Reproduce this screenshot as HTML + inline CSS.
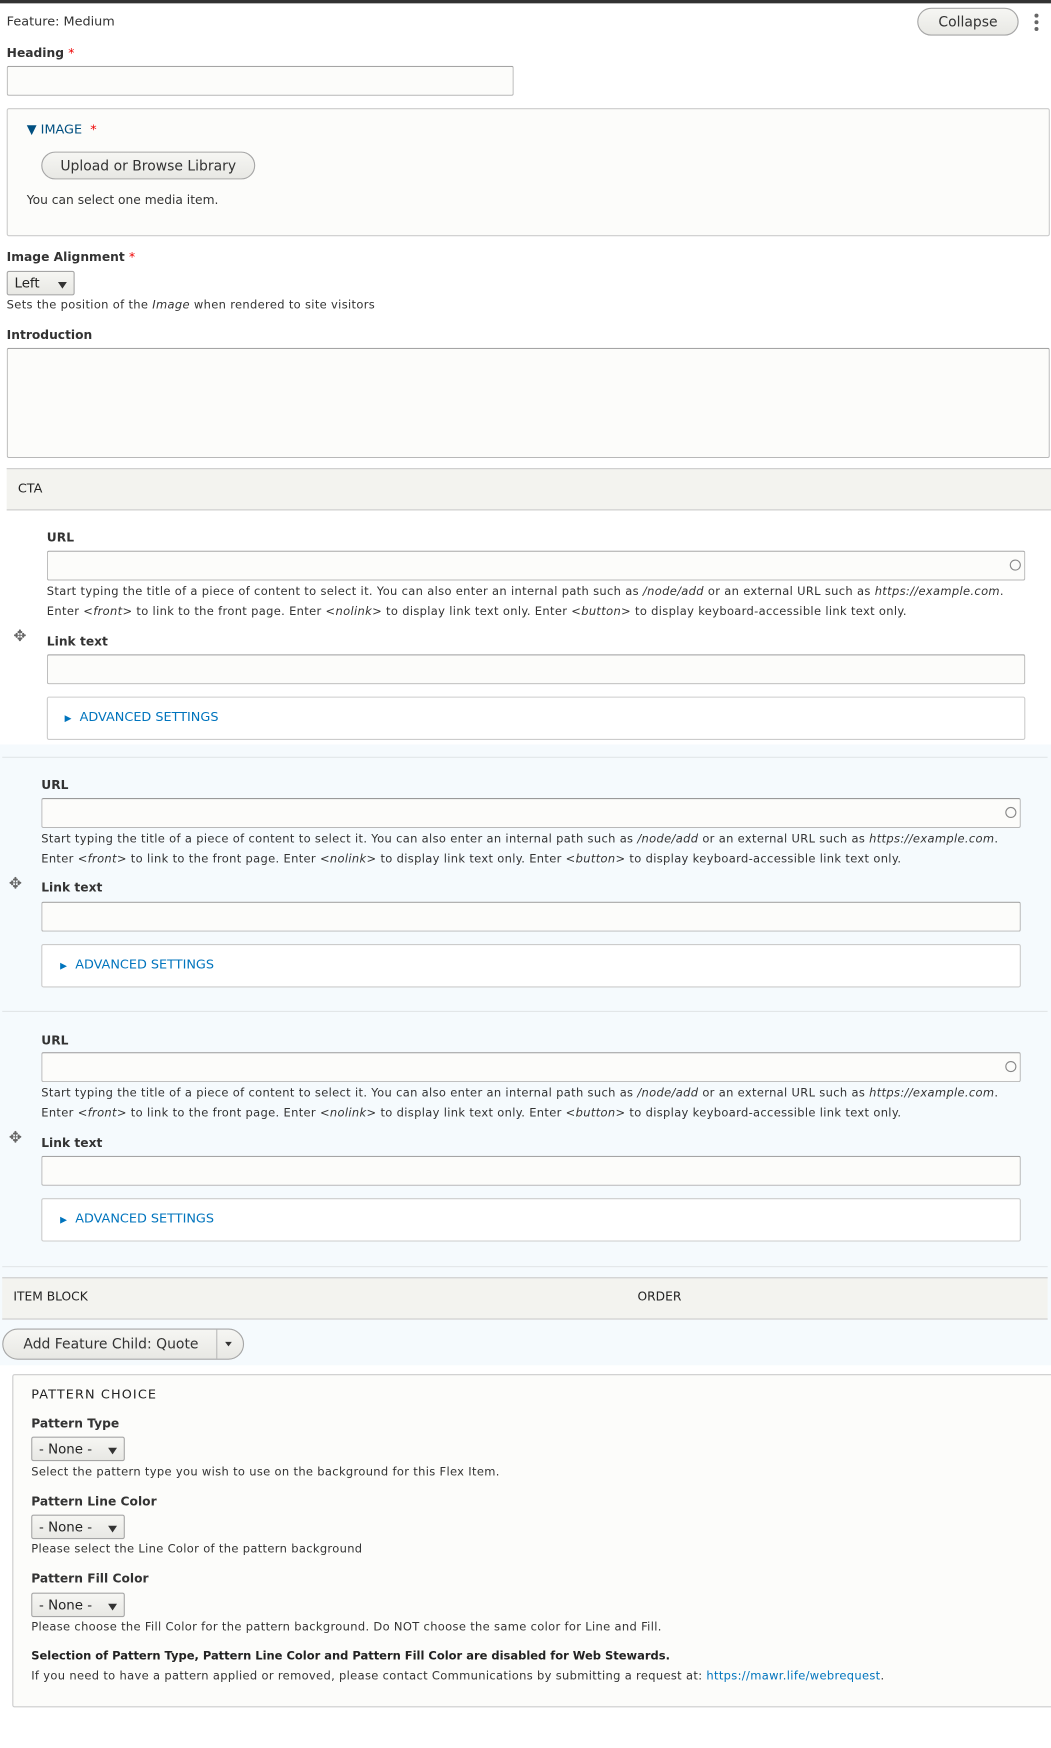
<!DOCTYPE html>
<html><head><meta charset="utf-8"><style>
html,body{margin:0;padding:0;background:#fff;width:1051px;height:1748px;overflow:hidden}
#w{position:absolute;left:0;top:0;width:943px;height:1568px;transform:scale(1.1145);transform-origin:0 0;font-family:"DejaVu Sans","Liberation Sans",sans-serif;color:#222}
.a{position:absolute;white-space:nowrap}
.lab{font-size:11px;font-weight:bold;color:#333}
.d{font-size:10.3px;color:#333;letter-spacing:0.3px}
.req{color:#e00;font-weight:normal}
.inp{position:absolute;background:#fcfcfa;border:1px solid #b8b8b8;border-top-color:#999;border-radius:2px;box-sizing:border-box}
.btn{position:absolute;box-sizing:border-box;border:1px solid #a6a6a6;border-radius:14px;background:linear-gradient(#f6f6f3,#e8e8e4);font-size:12.5px;color:#333;text-align:center}
.sel{position:absolute;box-sizing:border-box;border:1px solid #a6a6a6;border-radius:2px;background:linear-gradient(#f6f6f3,#e8e8e4);font-size:12px;color:#222;padding-left:6px}
.sel:after{content:"";position:absolute;right:6px;top:9px;border-left:4px solid transparent;border-right:4px solid transparent;border-top:6px solid #333}
.fs{position:absolute;box-sizing:border-box;border:1px solid #ccc;border-radius:2px;background:#fcfcfa}
.adv{color:#0074bd;font-size:11.5px}
.blue{color:#0074bd}
i{font-style:italic}
.circ{position:absolute;width:8px;height:8px;border:1px solid #888;border-radius:50%}
</style></head><body><div id="w">
<div class="a" style="left:0;top:0;width:943px;height:3px;background:#333"></div>
<div class="a" style="left:6px;top:12px;font-size:11.5px;color:#333">Feature: Medium</div>
<div class="btn" style="left:823px;top:7px;width:91px;height:25px;line-height:23px">Collapse</div>
<svg class="a" style="left:927px;top:11px" width="6" height="18"><circle cx="3" cy="3" r="1.8" fill="#666"/><circle cx="3" cy="9" r="1.8" fill="#666"/><circle cx="3" cy="15" r="1.8" fill="#666"/></svg>

<div class="a lab" style="left:6px;top:41px">Heading <span class="req">*</span></div>
<div class="inp" style="left:6px;top:59px;width:455px;height:27px"></div>

<div class="fs" style="left:6px;top:97px;width:936px;height:115px"></div>
<div class="a adv" style="left:24px;top:109px;color:#004f80">▼ IMAGE <span class="req">&nbsp;*</span></div>
<div class="btn" style="left:37px;top:136px;width:192px;height:25px;line-height:23px">Upload or Browse Library</div>
<div class="a" style="left:24px;top:173px;font-size:11px;color:#333">You can select one media item.</div>

<div class="a lab" style="left:6px;top:224px">Image Alignment <span class="req">*</span></div>
<div class="sel" style="left:6px;top:243px;width:61px;height:22px;line-height:20px">Left</div>
<div class="a d" style="left:6px;top:268px">Sets the position of the <i>Image</i> when rendered to site visitors</div>

<div class="a lab" style="left:6px;top:294px">Introduction</div>
<div class="inp" style="left:6px;top:312px;width:936px;height:99px"></div>

<div class="a" style="left:6px;top:420px;width:937px;height:36px;background:#f3f3ef;border-top:1px solid #ccc;border-bottom:1px solid #ccc"></div>
<div class="a" style="left:16px;top:431px;font-size:11.5px;color:#222">CTA</div>

<!-- row 1 -->
<div class="a lab" style="left:42px;top:476px">URL</div>
<div class="inp" style="left:42px;top:494px;width:878px;height:27px"></div>
<div class="circ" style="left:906px;top:502px"></div>
<div class="a d" style="left:42px;top:525px">Start typing the title of a piece of content to select it. You can also enter an internal path such as <i>/node/add</i> or an external URL such as <i>https://example.com</i>.</div>
<div class="a d" style="left:42px;top:543px">Enter <i>&lt;front&gt;</i> to link to the front page. Enter <i>&lt;nolink&gt;</i> to display link text only. Enter <i>&lt;button&gt;</i> to display keyboard-accessible link text only.</div>
<div class="a" style="left:12px;top:563px;font-size:14px;color:#666">✥</div>
<div class="a lab" style="left:42px;top:569px">Link text</div>
<div class="inp" style="left:42px;top:587px;width:878px;height:27px"></div>
<div class="fs" style="left:42px;top:625px;width:878px;height:39px;background:#fff"></div>
<div class="a adv" style="left:58px;top:636px"><span style="font-size:8px">▶</span>&nbsp; ADVANCED SETTINGS</div>

<div class="a" style="left:0;top:668px;width:943px;height:557px;background:#f5fafd"></div>
<div class="a" style="left:2px;top:679px;width:938px;height:1px;background:#e2e6e8"></div>
<div class="a lab" style="left:37px;top:698px">URL</div>
<div class="inp" style="left:37px;top:716px;width:879px;height:27px"></div>
<div class="circ" style="left:902px;top:724px"></div>
<div class="a d" style="left:37px;top:747px">Start typing the title of a piece of content to select it. You can also enter an internal path such as <i>/node/add</i> or an external URL such as <i>https://example.com</i>.</div>
<div class="a d" style="left:37px;top:765px">Enter <i>&lt;front&gt;</i> to link to the front page. Enter <i>&lt;nolink&gt;</i> to display link text only. Enter <i>&lt;button&gt;</i> to display keyboard-accessible link text only.</div>
<div class="a" style="left:8px;top:785px;font-size:14px;color:#666">✥</div>
<div class="a lab" style="left:37px;top:790px">Link text</div>
<div class="inp" style="left:37px;top:809px;width:879px;height:27px"></div>
<div class="fs" style="left:37px;top:847px;width:879px;height:39px;background:#fff"></div>
<div class="a adv" style="left:54px;top:858px"><span style="font-size:8px">▶</span>&nbsp; ADVANCED SETTINGS</div>

<div class="a" style="left:2px;top:907px;width:938px;height:1px;background:#e2e6e8"></div>
<div class="a lab" style="left:37px;top:927px">URL</div>
<div class="inp" style="left:37px;top:944px;width:879px;height:27px"></div>
<div class="circ" style="left:902px;top:952px"></div>
<div class="a d" style="left:37px;top:975px">Start typing the title of a piece of content to select it. You can also enter an internal path such as <i>/node/add</i> or an external URL such as <i>https://example.com</i>.</div>
<div class="a d" style="left:37px;top:993px">Enter <i>&lt;front&gt;</i> to link to the front page. Enter <i>&lt;nolink&gt;</i> to display link text only. Enter <i>&lt;button&gt;</i> to display keyboard-accessible link text only.</div>
<div class="a" style="left:8px;top:1013px;font-size:14px;color:#666">✥</div>
<div class="a lab" style="left:37px;top:1019px">Link text</div>
<div class="inp" style="left:37px;top:1037px;width:879px;height:27px"></div>
<div class="fs" style="left:37px;top:1075px;width:879px;height:39px;background:#fff"></div>
<div class="a adv" style="left:54px;top:1086px"><span style="font-size:8px">▶</span>&nbsp; ADVANCED SETTINGS</div>
<div class="a" style="left:2px;top:1136px;width:938px;height:1px;background:#e2e6e8"></div>

<div class="a" style="left:2px;top:1146px;width:938px;height:36px;background:#f3f3ef;border-top:1px solid #ccc;border-bottom:1px solid #ccc"></div>
<div class="a" style="left:12px;top:1157px;font-size:11px;color:#222">ITEM BLOCK</div>
<div class="a" style="left:572px;top:1157px;font-size:11px;color:#222">ORDER</div>
<div class="btn" style="left:2px;top:1192px;width:217px;height:28px;line-height:26px;text-align:left;padding-left:18px">Add Feature Child: Quote</div>
<div class="a" style="left:194px;top:1193px;width:1px;height:26px;background:#bbb"></div>
<div class="a" style="left:202px;top:1204px;border-left:3px solid transparent;border-right:3px solid transparent;border-top:4px solid #333"></div>

<div class="fs" style="left:11px;top:1233px;width:940px;height:299px"></div>
<div class="a" style="left:28px;top:1244px;font-size:11.5px;letter-spacing:1px;color:#222">PATTERN CHOICE</div>
<div class="a lab" style="left:28px;top:1271px">Pattern Type</div>
<div class="sel" style="left:28px;top:1289px;width:84px;height:22px;line-height:20px">- None -</div>
<div class="a d" style="left:28px;top:1315px">Select the pattern type you wish to use on the background for this Flex Item.</div>
<div class="a lab" style="left:28px;top:1341px">Pattern Line Color</div>
<div class="sel" style="left:28px;top:1359px;width:84px;height:22px;line-height:20px">- None -</div>
<div class="a d" style="left:28px;top:1384px">Please select the Line Color of the pattern background</div>
<div class="a lab" style="left:28px;top:1410px">Pattern Fill Color</div>
<div class="sel" style="left:28px;top:1429px;width:84px;height:22px;line-height:20px">- None -</div>
<div class="a d" style="left:28px;top:1454px">Please choose the Fill Color for the pattern background. Do NOT choose the same color for Line and Fill.</div>
<div class="a d" style="left:28px;top:1480px;font-weight:bold;color:#222;letter-spacing:0">Selection of Pattern Type, Pattern Line Color and Pattern Fill Color are disabled for Web Stewards.</div>
<div class="a d" style="left:28px;top:1498px">If you need to have a pattern applied or removed, please contact Communications by submitting a request at: <span class="blue">https://mawr.life/webrequest</span>.</div>
</div></body></html>
